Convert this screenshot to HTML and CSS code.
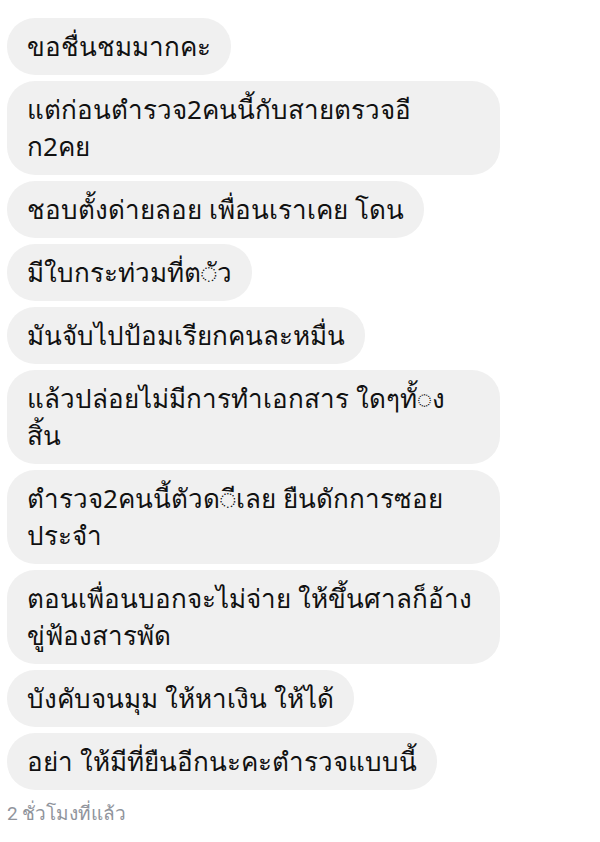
FILE: index.html
```html
<!DOCTYPE html>
<html lang="th">
<head>
<meta charset="utf-8">
<link rel="stylesheet" href="styles.css">
</head>
<body>
<div class="thread">
  <div class="msg">ขอชื่นชมมากคะ</div>
  <div class="msg wide">แต่ก่อนตำรวจ2คนนี้กับสายตรวจอี<br>ก2คย</div>
  <div class="msg">ชอบตั้งด่ายลอย เพื่อนเราเคย โดน</div>
  <div class="msg">มีใบกระท่วมที่ต◌ัว</div>
  <div class="msg">มันจับไปป้อมเรียกคนละหมื่น</div>
  <div class="msg wide">แล้วปล่อยไม่มีการทำเอกสาร ใดๆทั้◌ง<br>สิ้น</div>
  <div class="msg wide">ตำรวจ2คนนี้ตัวด◌ีเลย ยืนดักการซอย<br>ประจำ</div>
  <div class="msg wide">ตอนเพื่อนบอกจะไม่จ่าย ให้ขึ้นศาลก็อ้าง<br>ขู่ฟ้องสารพัด</div>
  <div class="msg">บังคับจนมุม ให้หาเงิน ให้ได้</div>
  <div class="msg">อย่า ให้มีที่ยืนอีกนะคะตำรวจแบบนี้</div>
  <div class="time">2 ชั่วโมงที่แล้ว</div>
</div>
</body>
</html>
```

FILE: styles.css
```css
html, body {
  margin: 0;
  padding: 0;
  background: #ffffff;
}
.thread {
  width: 493px;
  padding: 18px 0 0 7px;
  display: flex;
  flex-direction: column;
  align-items: flex-start;
  gap: 6px;
}
.msg {
  background: #f0f0f0;
  color: #111111;
  font-family: "Noto Sans", "DejaVu Sans", sans-serif;
  font-size: 26px;
  line-height: 37px;
  padding: 10px 20px;
  border-radius: 28px;
  white-space: nowrap;
}
.msg.wide {
  align-self: stretch;
}
.time {
  margin-top: 6px;
  font-family: Roboto, "Noto Sans", sans-serif;
  font-size: 19px;
  line-height: 24px;
  color: #90949c;
}
```
